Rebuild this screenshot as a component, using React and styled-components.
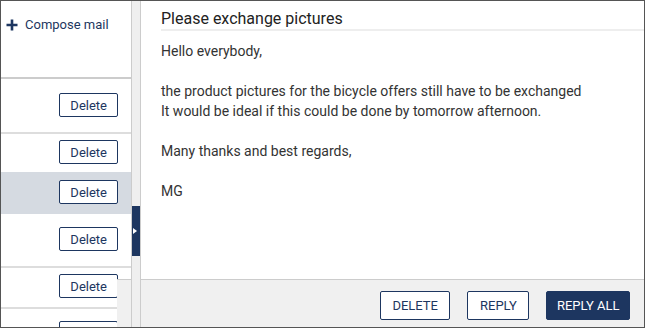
import { createGlobalStyle, styled } from 'styled-components';

const GlobalStyle = createGlobalStyle`
	* {
		box-sizing: border-box;
	}

	body {
		margin: 0;
		font-family: Roboto, 'Liberation Sans', sans-serif;
		background: #fff;
	}
`;

const NAVY = '#1d3660';

const mails = [
	{ id: 1, height: 53, top: 14, divider: true },
	{ id: 2, height: 38, top: 6, divider: false },
	{ id: 3, height: 42, top: 8, divider: false, selected: true },
	{ id: 4, height: 52, top: 13, divider: true },
	{ id: 5, height: 39, top: 6, divider: true },
	{ id: 6, height: 40, top: 12, divider: false },
];

const Frame = styled.div`
	display: flex;
	width: 645px;
	height: 328px;
	border: 1px solid #555;
	overflow: hidden;
`;

const MailList = styled.div`
	position: relative;
	display: flex;
	flex-direction: column;
	width: 130px;
	flex-shrink: 0;
	overflow: hidden;
`;

const ListHeader = styled.div`
	display: flex;
	align-items: flex-start;
	height: 78px;
	padding: 16px 0 0 5px;
	border-bottom: 2px solid #ccc;
	flex-shrink: 0;
`;

const ComposeLink = styled.a`
	display: flex;
	align-items: center;
	gap: 7px;
	font-size: 13px;
	line-height: 16px;
	color: ${NAVY};
	text-decoration: none;
	cursor: pointer;
`;

const MailRow = styled.div`
	display: flex;
	justify-content: flex-end;
	align-items: flex-start;
	flex-shrink: 0;
	height: ${({ $height, $divider }) => $height + ($divider ? 2 : 0)}px;
	padding: ${({ $top }) => $top}px 13px 0 0;
	background: ${({ $selected }) => ($selected ? '#d5dae1' : '#fff')};
	border-bottom: ${({ $divider }) => ($divider ? '2px solid #ddd' : 'none')};
`;

const SmallButton = styled.button`
	height: 24px;
	padding: 0 10px;
	font-family: inherit;
	font-size: 13px;
	color: ${NAVY};
	background: #fff;
	border: 1px solid ${NAVY};
	border-radius: 2px;
	cursor: pointer;
`;

const ScrollCorner = styled.div`
	position: absolute;
	right: 0;
	bottom: 0;
	width: 14px;
	height: 48px;
	background: #f0f0f0;
	border-top: 1px solid #ccc;
`;

const Splitter = styled.div`
	display: flex;
	flex-direction: column;
	width: 10px;
	flex-shrink: 0;
	background: #efefef;
	border-left: 1px solid #ccc;
	border-right: 1px solid #ccc;
`;

const SplitterTab = styled.div`
	display: flex;
	align-items: center;
	justify-content: flex-start;
	height: 50px;
	margin-top: 205px;
	padding-left: 1px;
	background: ${NAVY};

	&::after {
		content: '';
		border-top: 3.5px solid transparent;
		border-bottom: 3.5px solid transparent;
		border-left: 4px solid #fff;
	}
`;

const Reader = styled.div`
	display: flex;
	flex-direction: column;
	flex: 1;
	min-width: 0;
`;

const Subject = styled.h2`
	margin: 0 0 0 20px;
	padding-top: 8px;
	font-size: 16px;
	font-weight: 400;
	line-height: 20px;
	color: #222;
	border-bottom: 2px solid #eee;
`;

const MailBody = styled.div`
	flex: 1;
	padding: 10px 20px 0;
	font-size: 14px;
	line-height: 20px;
	color: #333;

	& p {
		margin: 0 0 20px;
	}
`;

const Footer = styled.div`
	display: flex;
	justify-content: flex-end;
	align-items: flex-start;
	gap: 17px;
	height: 48px;
	padding: 11px 14px 0 0;
	background: #f0f0f0;
	border-top: 1px solid #ccc;
	flex-shrink: 0;
`;

const ActionButton = styled.button`
	height: 29px;
	padding: 0 ${({ $primary }) => ($primary ? 9.5 : 11.5)}px;
	font-family: inherit;
	font-size: 13px;
	text-transform: uppercase;
	color: ${({ $primary }) => ($primary ? '#fff' : NAVY)};
	background: ${({ $primary }) => ($primary ? NAVY : '#fff')};
	border: 1px solid ${NAVY};
	border-radius: 2px;
	cursor: pointer;
`;

const PlusIcon = () => (
	<svg width="12" height="12" viewBox="0 0 12 12">
		<path d="M6 0.5V11.5M0.5 6H11.5" stroke={NAVY} strokeWidth="2.6" />
	</svg>
);

export default function App() {
	return (
		<>
			<GlobalStyle />
			<Frame>
				<MailList>
					<ListHeader>
						<ComposeLink>
							<PlusIcon />
							Compose mail
						</ComposeLink>
					</ListHeader>
					{mails.map(({ id, height, top, divider, selected }) => (
						<MailRow
							key={id}
							$height={height}
							$top={top}
							$divider={divider}
							$selected={selected}
						>
							<SmallButton>Delete</SmallButton>
						</MailRow>
					))}
					<ScrollCorner />
				</MailList>
				<Splitter>
					<SplitterTab />
				</Splitter>
				<Reader>
					<Subject>Please exchange pictures</Subject>
					<MailBody>
						<p>Hello everybody,</p>
						<p>
							the product pictures for the bicycle offers still have to be exchanged
							<br />
							It would be ideal if this could be done by tomorrow afternoon.
						</p>
						<p>Many thanks and best regards,</p>
						<p>MG</p>
					</MailBody>
					<Footer>
						<ActionButton>Delete</ActionButton>
						<ActionButton>Reply</ActionButton>
						<ActionButton $primary>Reply all</ActionButton>
					</Footer>
				</Reader>
			</Frame>
		</>
	);
}
